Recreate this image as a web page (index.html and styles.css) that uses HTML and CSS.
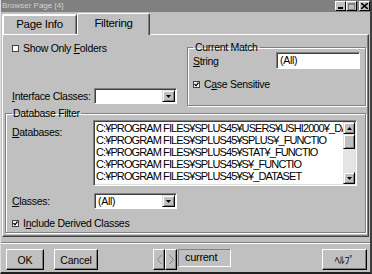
FILE: index.html
```html
<!DOCTYPE html>
<html lang="en">
<head>
    <meta charset="UTF-8">
    <title>Browser Page [4]</title>
    <link rel="stylesheet" href="styles.css">
</head>
<body>
    <div class="window">
        <div class="titlebar">
            <span class="title">Browser Page [4]</span>
            <div class="caption-buttons">
                <span class="cap-btn"><svg width="5" height="2"><rect width="5" height="2" fill="#000"/></svg></span>
                <span class="cap-btn disabled"><svg width="7" height="7"><rect x="0.5" y="0.5" width="6" height="6" fill="none" stroke="#808080"/><rect x="0" y="0" width="7" height="2" fill="#808080"/></svg></span>
                <span class="cap-btn close"><svg width="7" height="6"><path d="M0 0 L7 6 M7 0 L0 6" stroke="#000" stroke-width="1.6"/></svg></span>
            </div>
        </div>

        <div class="tabs">
            <div class="tab">Page Info</div>
            <div class="tab active">Filtering</div>
        </div>

        <div class="panel">
            <div class="upper">
                <div class="left-col">
                    <div class="check-row"><span class="check"></span><span>Show Only <u>F</u>olders</span></div>
                    <div class="field-row">
                        <span class="label"><u>I</u>nterface Classes:</span>
                        <div class="combo">
                            <span class="combo-text"></span>
                            <span class="drop-btn"><svg width="5" height="3"><polygon points="0,0 5,0 2.5,3" fill="#000"/></svg></span>
                        </div>
                    </div>
                </div>

                <fieldset class="group match">
                    <legend>Current Match</legend>
                    <div class="string-row">
                        <span class="label"><u>S</u>tring</span>
                        <div class="textbox">(All)</div>
                    </div>
                    <div class="check-row"><span class="check checked"><svg width="5" height="5"><polyline points="0.5,2 2,3.8 4.5,0.5" fill="none" stroke="#000" stroke-width="1.3"/></svg></span><span>C<u>a</u>se Sensitive</span></div>
                </fieldset>
            </div>

            <fieldset class="group dbfilter">
                <legend>Database Filter</legend>
                <div class="db-row">
                    <span class="label"><u>D</u>atabases:</span>
                    <div class="listbox">
                        <div class="items">
                            <div class="item">C:¥PROGRAM FILES¥SPLUS45¥USERS¥USHI2000¥_DATA</div>
                            <div class="item">C:¥PROGRAM FILES¥SPLUS45¥SPLUS¥_FUNCTIO</div>
                            <div class="item">C:¥PROGRAM FILES¥SPLUS45¥STAT¥_FUNCTIO</div>
                            <div class="item">C:¥PROGRAM FILES¥SPLUS45¥S¥_FUNCTIO</div>
                            <div class="item">C:¥PROGRAM FILES¥SPLUS45¥S¥_DATASET</div>
                            <div class="item">C:¥PROGRAM FILES¥SPLUS45¥STAT¥_DATASET</div>
                        </div>
                        <div class="vscroll">
                            <span class="sb-btn"><svg width="5" height="3"><polygon points="0,3 5,3 2.5,0" fill="#000"/></svg></span>
                            <span class="sb-thumb"></span>
                            <span class="sb-track"></span>
                            <span class="sb-btn"><svg width="5" height="3"><polygon points="0,0 5,0 2.5,3" fill="#000"/></svg></span>
                        </div>
                    </div>
                </div>
                <div class="field-row classes-row">
                    <span class="label"><u>C</u>lasses:</span>
                    <div class="combo">
                        <span class="combo-text">(All)</span>
                        <span class="drop-btn"><svg width="5" height="3"><polygon points="0,0 5,0 2.5,3" fill="#000"/></svg></span>
                    </div>
                </div>
                <div class="check-row derived"><span class="check checked"><svg width="5" height="5"><polyline points="0.5,2 2,3.8 4.5,0.5" fill="none" stroke="#000" stroke-width="1.3"/></svg></span><span>I<u>n</u>clude Derived Classes</span></div>
            </fieldset>
        </div>

        <div class="separator"></div>

        <div class="footer">
            <button class="btn ok">OK</button>
            <button class="btn cancel">Cancel</button>
            <div class="nav">
                <span class="nav-btn"><svg width="5" height="9"><polyline points="4.5,0 0.5,4.5 4.5,9" fill="none" stroke="#808080"/></svg></span>
                <span class="nav-btn"><svg width="5" height="9"><polyline points="0.5,0 4.5,4.5 0.5,9" fill="none" stroke="#808080"/></svg></span>
                <span class="current">current</span>
            </div>
            <button class="btn help">ﾍﾙﾌﾟ</button>
        </div>
    </div>
</body>
</html>
```

FILE: styles.css
```css
* {
    margin: 0;
    padding: 0;
    box-sizing: border-box;
}

body {
    width: 372px;
    height: 274px;
    overflow: hidden;
    background-color: #c0c0c0;
    font-family: "Liberation Sans", Arial, "Noto Sans CJK JP", sans-serif;
    font-size: 10.5px;
    letter-spacing: -0.3px;
    color: #000;
}

u {
    text-decoration: underline;
    text-underline-offset: 1px;
}

.window {
    width: 372px;
    height: 274px;
    border-left: 1px solid #dfdfdf;
    border-right: 2px solid #404040;
    border-bottom: 2px solid #202020;
}

/* title bar */
.titlebar {
    height: 12px;
    background-color: #808080;
    display: flex;
    align-items: center;
    justify-content: space-between;
    padding: 0 0 0 1px;
}

.title {
    font-size: 8px;
    letter-spacing: 0;
    color: #d0d0d0;
    line-height: 12px;
}

.caption-buttons {
    display: flex;
}

.cap-btn {
    width: 11px;
    height: 10px;
    background-color: #c0c0c0;
    border-top: 1px solid #fff;
    border-left: 1px solid #fff;
    border-right: 1px solid #000;
    border-bottom: 1px solid #000;
    display: flex;
    align-items: flex-end;
    justify-content: center;
    padding-bottom: 1px;
}

.cap-btn.disabled {
    align-items: center;
    padding-bottom: 0;
}

.cap-btn.close {
    margin-left: 2px;
    align-items: center;
    padding-bottom: 0;
}

/* tabs */
.tabs {
    height: 22px;
    display: flex;
    align-items: flex-end;
    padding-left: 1px;
}

.tab {
    width: 75px;
    height: 20px;
    border-top: 1px solid #fff;
    border-left: 1px solid #fff;
    border-right: 1px solid #404040;
    box-shadow: inset 1px 1px 0 #fff, inset -1px 0 0 #808080;
    border-radius: 2px 2px 0 0;
    text-align: center;
    font-size: 11.5px;
    line-height: 18px;
}

.tab.active {
    width: 73px;
    height: 22px;
    margin-bottom: -1px;
    background-color: #c0c0c0;
    position: relative;
    z-index: 1;
    box-shadow: inset -1px 0 0 #808080;
    line-height: 19px;
}

/* tab page */
.panel {
    margin-left: 1px;
    width: 367px;
    height: 203px;
    border-top: 1px solid #fff;
    border-left: 1px solid #fff;
    border-right: 1px solid #404040;
    border-bottom: 1px solid #404040;
    box-shadow: inset -1px -1px 0 #808080;
}

.upper {
    display: flex;
    height: 71px;
}

.left-col {
    width: 184px;
    padding-left: 9px;
    display: flex;
    flex-direction: column;
}

.left-col .check-row {
    margin-top: 7px;
}

.left-col .field-row {
    margin-top: auto;
    margin-bottom: 2px;
}

.check-row {
    height: 12px;
    display: flex;
    align-items: center;
    white-space: nowrap;
}

.check {
    width: 7px;
    height: 7px;
    margin-right: 4px;
    background-color: #fff;
    border: 1px solid #404040;
    display: flex;
    align-items: center;
    justify-content: center;
}

.field-row {
    height: 16px;
    display: flex;
    align-items: center;
}

.label {
    display: block;
    white-space: nowrap;
}

.left-col .label {
    width: 82px;
}

/* group boxes */
.group {
    border: 1px solid #808080;
    box-shadow: inset 1px 1px 0 #fff, 1px 1px 0 #fff;
}

.group legend {
    line-height: 11px;
    padding: 0 2px;
}

.match {
    margin-top: 7px;
    width: 178px;
    height: 64px;
    padding: 0 5px;
}

.string-row {
    height: 17px;
    margin-top: -1px;
    display: flex;
    align-items: center;
}

.string-row .label {
    width: 83px;
}

.textbox {
    width: 84px;
    height: 17px;
    background-color: #fff;
    border-top: 1px solid #808080;
    border-left: 1px solid #808080;
    border-right: 1px solid #fff;
    border-bottom: 1px solid #fff;
    box-shadow: inset 1px 1px 0 #404040;
    padding: 1px 0 0 3px;
    line-height: 13px;
}

.match .check-row {
    margin-top: 9px;
}

.dbfilter {
    margin: 2px 0 0 2px;
    width: 361px;
    height: 125px;
    padding: 0 6px;
}

.dbfilter legend {
    padding: 0 1px;
}

.db-row {
    display: flex;
    margin-top: 1px;
}

.db-row .label {
    width: 81px;
    padding-top: 6px;
}

.listbox {
    width: 264px;
    height: 66px;
    display: flex;
    background-color: #fff;
    border-top: 1px solid #808080;
    border-left: 1px solid #808080;
    border-right: 1px solid #fff;
    border-bottom: 1px solid #fff;
    box-shadow: inset 1px 1px 0 #404040, inset -1px -1px 0 #dfdfdf;
    padding: 1px;
}

.items {
    flex: 1;
    overflow: hidden;
    padding-left: 1px;
    font-size: 11px;
    letter-spacing: -0.9px;
}

.item {
    height: 12px;
    line-height: 12px;
    white-space: nowrap;
}

.vscroll {
    width: 12px;
    display: flex;
    flex-direction: column;
}

.sb-btn {
    height: 12px;
    background-color: #c0c0c0;
    border-top: 1px solid #dfdfdf;
    border-left: 1px solid #dfdfdf;
    border-right: 1px solid #000;
    border-bottom: 1px solid #000;
    box-shadow: inset 1px 1px 0 #fff, inset -1px -1px 0 #808080;
    display: flex;
    align-items: center;
    justify-content: center;
}

.sb-thumb {
    height: 15px;
    background-color: #c0c0c0;
    border-top: 1px solid #dfdfdf;
    border-left: 1px solid #dfdfdf;
    border-right: 1px solid #000;
    border-bottom: 1px solid #000;
    box-shadow: inset 1px 1px 0 #fff, inset -1px -1px 0 #808080;
}

.sb-track {
    flex: 1;
    background-color: #e4e4e4;
}

.classes-row {
    margin-top: 7px;
}

.classes-row .label {
    width: 82px;
}

.combo {
    width: 83px;
    height: 16px;
    display: flex;
    background-color: #fff;
    border-top: 1px solid #808080;
    border-left: 1px solid #808080;
    border-right: 1px solid #fff;
    border-bottom: 1px solid #fff;
    box-shadow: inset 1px 1px 0 #404040;
    padding: 1px;
}

.combo-text {
    flex: 1;
    padding-left: 2px;
    line-height: 12px;
}

.drop-btn {
    width: 13px;
    background-color: #c0c0c0;
    border-top: 1px solid #dfdfdf;
    border-left: 1px solid #dfdfdf;
    border-right: 1px solid #000;
    border-bottom: 1px solid #000;
    box-shadow: inset 1px 1px 0 #fff, inset -1px -1px 0 #808080;
    display: flex;
    align-items: center;
    justify-content: center;
}

.derived {
    margin-top: 8px;
}

/* bottom buttons */
.separator {
    margin-top: 5px;
    height: 2px;
    border-top: 1px solid #808080;
    border-bottom: 1px solid #fff;
}

.footer {
    height: 28px;
    display: flex;
    align-items: flex-start;
    padding: 5px 3px 0 5px;
}

.btn {
    height: 21px;
    background-color: #c0c0c0;
    font-family: inherit;
    font-size: 10.5px;
    letter-spacing: -0.2px;
    color: #000;
    border-top: 1px solid #fff;
    border-left: 1px solid #fff;
    border-right: 1px solid #000;
    border-bottom: 1px solid #000;
    box-shadow: inset -1px -1px 0 #808080;
}

.ok {
    width: 38px;
}

.cancel {
    width: 44px;
    margin-left: 10px;
}

.nav {
    display: flex;
    margin-left: 55px;
}

.nav-btn {
    width: 12px;
    height: 21px;
    border-top: 1px solid #fff;
    border-left: 1px solid #fff;
    border-right: 1px solid #000;
    border-bottom: 1px solid #000;
    box-shadow: inset -1px -1px 0 #808080;
    display: flex;
    align-items: center;
    justify-content: center;
}

.current {
    width: 53px;
    height: 18px;
    margin-left: 1px;
    border-top: 1px solid #808080;
    border-left: 1px solid #808080;
    border-right: 1px solid #fff;
    border-bottom: 1px solid #fff;
    padding-left: 6px;
    font-size: 11px;
    line-height: 15px;
}

.help {
    width: 45px;
    margin-left: auto;
    font-family: "Noto Sans CJK JP", sans-serif;
    font-size: 10px;
}
```
